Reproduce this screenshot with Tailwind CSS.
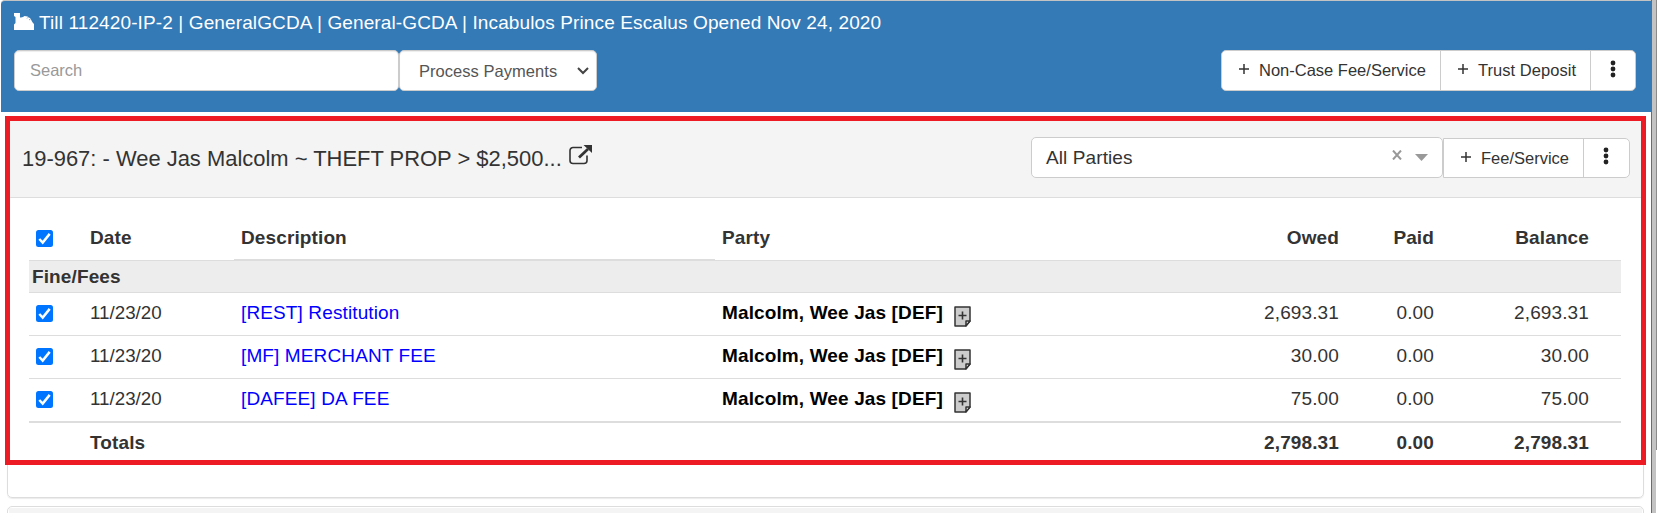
<!DOCTYPE html>
<html lang="en">
<head>
<meta charset="utf-8">
<title>Till</title>
<script src="https://cdn.jsdelivr.net/npm/@tailwindcss/browser@4"></script>
</head>
<body class="w-[1657px] h-[513px] overflow-hidden bg-white font-['Liberation_Sans',Arial,sans-serif] text-[#333] text-[19px]">
<svg class="hidden">
  <symbol id="plus" viewBox="0 0 10 10"><path d="M5 0v10M0 5h10" stroke="#333" stroke-width="1.500"/></symbol>
  <symbol id="dots" viewBox="0 0 6 18"><g fill="#222"><circle cx="3" cy="3" r="2.400"/><circle cx="3" cy="9" r="2.400"/><circle cx="3" cy="15" r="2.400"/></g></symbol>
  <symbol id="check" viewBox="0 0 17 17"><rect width="17" height="17" rx="2.500" fill="#0075ff"/><path d="M3.300 9l3.400 3.500 7-8.600" fill="none" stroke="#fff" stroke-width="2.500"/></symbol>
  <symbol id="note" viewBox="0 0 17 21"><path d="M1 1h15v14l-4.500 5H1z" fill="#ccc" stroke="#333" stroke-width="1.500" stroke-linejoin="round"/><path d="M16 15h-4v5z" fill="#eee" stroke="#333" stroke-width="1.500" stroke-linejoin="round"/><path d="M8.500 5.500v8M4.500 9.500h8" stroke="#333" stroke-width="1.600"/></symbol>
</svg>
<div class="relative flex w-full h-full">
  <div class="w-px shrink-0 bg-white"></div>
  <div class="w-[1650px] shrink-0 flex flex-col">
    <header class="h-[112px] shrink-0 bg-[#337ab7] border-t border-[#c3c3c3] rounded-tl-[4px]">
      <div class="flex items-center h-[43px] pl-[13px] text-white whitespace-nowrap tracking-[0.12px]">
        <svg class="w-5 h-[17px] -mt-0.5 mr-[5px] shrink-0" viewBox="0 0 20 17"><path d="M0 0h6v4.500h1l2-.500 1.500-1 3 .500 3 2 1.500 3 1 1.500 1 1V17H0v-5.500l1.500-1.500V4L0 3z" fill="#fff"/><path d="M13 5.500l1.500-1.500M15 7l1.700-1.200" stroke="#337ab7" stroke-width=".6"/></svg>
        <span class="pt-[2px]">Till 112420-IP-2 | GeneralGCDA | General-GCDA | Incabulos Prince Escalus Opened Nov 24, 2020</span>
      </div>
      <div class="flex items-center mt-[6px] pl-[13px] pr-[15px] text-[16.5px] h-[41px]">
        <div class="w-[385px] h-[41px] bg-white border border-[#ccc] rounded-[5px] flex items-center pl-[15px] text-[#999] shadow-[inset_0_1px_1px_rgba(0,0,0,.075)]">Search</div>
        <div class="w-[198px] h-[41px] bg-white border border-[#ccc] rounded-[5px] flex items-center pl-[19px] pt-px pr-[7px] text-[#555] shadow-[inset_0_1px_1px_rgba(0,0,0,.075)]">
          <span class="tracking-[0.04px]">Process Payments</span>
          <svg class="ml-auto w-3 h-2 -mt-px" viewBox="0 0 12 8"><path d="M1 1l5 5 5-5" fill="none" stroke="#444" stroke-width="2"/></svg>
        </div>
        <div class="ml-auto flex w-[415px] h-[41px] bg-white border border-[#ccc] rounded-[5px]">
          <div class="w-[219px] border-r border-[#ccc] flex items-center pl-[17px] whitespace-nowrap"><svg class="w-[10px] h-[10px] mr-[10px] -mt-[4px]"><use href="#plus"/></svg>Non-Case Fee/Service</div>
          <div class="w-[150px] border-r border-[#ccc] flex items-center pl-[17px] whitespace-nowrap"><svg class="w-[10px] h-[10px] mr-[10px] -mt-[4px]"><use href="#plus"/></svg><span class="tracking-[0.04px]">Trust Deposit</span></div>
          <div class="grow flex items-center justify-center"><svg class="w-1.5 h-[18px] -mt-[4px]"><use href="#dots"/></svg></div>
        </div>
      </div>
    </header>
    <main class="grow flex flex-col pl-[6px] pr-[7px] pt-[4px]">
      <section class="h-[382px] shrink-0 border border-[#ddd] rounded-[5px] shadow-[0_1px_1px_rgba(0,0,0,.08)] overflow-hidden">
        <div class="h-[81px] bg-[#f4f4f4] border-b border-[#ddd] flex items-start pt-[20px] pl-[14px] pr-[13px]">
          <div class="flex items-center h-[41px] text-[21.95px] whitespace-nowrap">
            <span class="pt-[4px]">19-967: - Wee Jas Malcolm ~ THEFT PROP &gt; $2,500...</span>
            <svg class="w-[24px] h-5 ml-[7px] -mt-[5px]" viewBox="0 0 24 20"><path d="M13 2.500H4a3 3 0 0 0-3 3v10a3 3 0 0 0 3 3h11a3 3 0 0 0 3-3v-5" fill="none" stroke="#333" stroke-width="1.600"/><path d="M10 12.500l9-8.500" stroke="#333" stroke-width="2.800"/><path d="M14.500 0H23v8z" fill="#333"/></svg>
          </div>
          <div class="ml-auto flex items-end h-[41px]">
            <div class="w-[412px] h-[41px] bg-white border border-[#ccc] rounded-[5px] flex items-center pl-[14px] pr-[14px]">
              <span class="tracking-[0.1px] pt-[2px]">All Parties</span>
              <svg class="ml-auto w-[10px] h-[10px] -mt-[5px] mr-[13px]" viewBox="0 0 10 10"><path d="M1 .500l8 9M9 .500l-8 9" stroke="#999" stroke-width="2"/></svg>
              <svg class="w-[13px] h-[7px]" viewBox="0 0 13 7"><path d="M0 0h13L6.500 7z" fill="#999"/></svg>
            </div>
            <div class="flex w-[187px] h-[40px] bg-white border border-[#ccc] rounded-r-[5px] text-[16.5px]">
              <div class="w-[140px] border-r border-[#ccc] flex items-center pl-[17px] whitespace-nowrap"><svg class="w-[10px] h-[10px] mr-[10px] -mt-[3px]"><use href="#plus"/></svg>Fee/Service</div>
              <div class="grow flex items-center justify-center"><svg class="w-1.5 h-[18px] -mt-[4px] mr-px"><use href="#dots"/></svg></div>
            </div>
          </div>
        </div>
        <div class="ml-[21px] mr-[22px] mt-[20px] tracking-[0.12px]">
          <div class="grid grid-cols-[54px_151px_481px_420px_211px_95px_155px_25px] h-[43px] font-bold border-b border-[#ddd] *:flex *:items-center *:px-[7px] *:pb-px">
            <div><svg class="w-[17px] h-[17px]"><use href="#check"/></svg></div>
            <div>Date</div><div class="border-b border-[#ddd]">Description</div><div>Party</div>
            <div class="justify-end">Owed</div><div class="justify-end">Paid</div><div class="justify-end">Balance</div><div></div>
          </div>
          <div class="h-[32px] bg-[#ededed] border-b border-[#ddd] font-bold flex items-center pl-[3px] pt-px">Fine/Fees</div>
          <div class="grid grid-cols-[54px_151px_481px_420px_211px_95px_155px_25px] h-[43px] border-b border-[#ddd] *:flex *:items-center *:px-[7px] *:pb-[2px]">
            <div><svg class="w-[17px] h-[17px] mt-px"><use href="#check"/></svg></div>
            <div class="text-[18.8px] tracking-normal">11/23/20</div><div class="text-[#00f]">[REST] Restitution</div><div class="font-bold text-black">Malcolm, Wee Jas [DEF]<svg class="w-[17px] h-[21px] ml-[11px] mt-[7px]"><use href="#note"/></svg></div>
            <div class="justify-end">2,693.31</div><div class="justify-end">0.00</div><div class="justify-end">2,693.31</div><div></div>
          </div>
          <div class="grid grid-cols-[54px_151px_481px_420px_211px_95px_155px_25px] h-[43px] border-b border-[#ddd] *:flex *:items-center *:px-[7px] *:pb-[2px]">
            <div><svg class="w-[17px] h-[17px] mt-px"><use href="#check"/></svg></div>
            <div class="text-[18.8px] tracking-normal">11/23/20</div><div class="text-[#00f]">[MF] MERCHANT FEE</div><div class="font-bold text-black">Malcolm, Wee Jas [DEF]<svg class="w-[17px] h-[21px] ml-[11px] mt-[7px]"><use href="#note"/></svg></div>
            <div class="justify-end">30.00</div><div class="justify-end">0.00</div><div class="justify-end">30.00</div><div></div>
          </div>
          <div class="grid grid-cols-[54px_151px_481px_420px_211px_95px_155px_25px] h-[44px] border-b-2 border-[#ddd] *:flex *:items-center *:px-[7px] *:pb-[2px]">
            <div><svg class="w-[17px] h-[17px] mt-px"><use href="#check"/></svg></div>
            <div class="text-[18.8px] tracking-normal">11/23/20</div><div class="text-[#00f]">[DAFEE] DA FEE</div><div class="font-bold text-black">Malcolm, Wee Jas [DEF]<svg class="w-[17px] h-[21px] ml-[11px] mt-[7px]"><use href="#note"/></svg></div>
            <div class="justify-end">75.00</div><div class="justify-end">0.00</div><div class="justify-end">75.00</div><div></div>
          </div>
          <div class="grid grid-cols-[54px_151px_481px_420px_211px_95px_155px_25px] h-[40px] font-bold *:flex *:items-center *:px-[7px] *:pt-px">
            <div></div><div>Totals</div><div></div><div></div>
            <div class="justify-end">2,798.31</div><div class="justify-end">0.00</div><div class="justify-end">2,798.31</div><div></div>
          </div>
        </div>
      </section>
      <section class="mt-[8px] h-[20px] shrink-0 border border-[#ddd] rounded-[5px] p-px"><div class="h-full bg-[#f4f4f4]"></div></section>
    </main>
  </div>
  <div class="w-px shrink-0 bg-[#337ab7]"></div>
  <div class="w-1 shrink-0 bg-[#c3c3c3]"></div>
  <div class="w-px shrink-0 bg-white"><div class="h-[450px] bg-[#8a8a8a]"></div></div>
  <div class="absolute left-[5px] top-[116px] w-[1641px] h-[349px] border-5 border-[#ed1c24]"></div>
</div>
</body>
</html>
